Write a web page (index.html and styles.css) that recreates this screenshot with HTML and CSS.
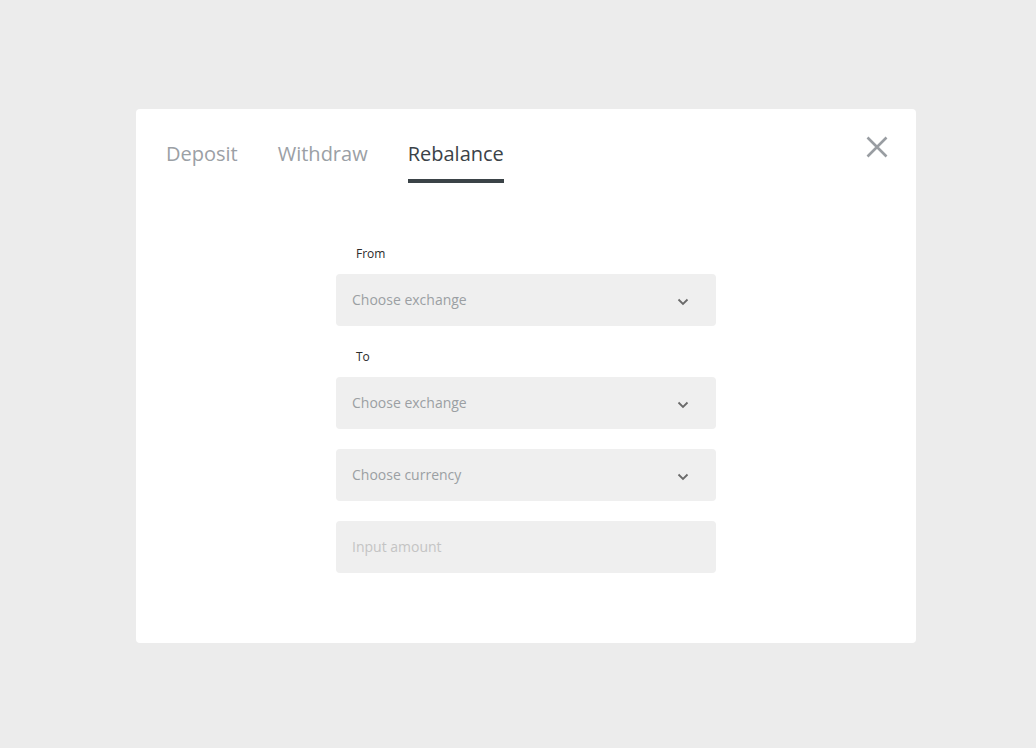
FILE: index.html
```html
<!DOCTYPE html>
<html>
<head>
<meta charset="utf-8">
<link rel="stylesheet" href="styles.css">
</head>
<body>
<div class="page">
  <div class="modal">
    <div class="head">
      <nav class="tabs">
        <span class="tab">Deposit</span>
        <span class="tab">Withdraw</span>
        <span class="tab active">Rebalance</span>
      </nav>
      <button class="close" aria-label="Close">
        <svg width="22" height="22" viewBox="0 0 22 22"><path d="M1.5 1.5L20.5 20.5M20.5 1.5L1.5 20.5" stroke="#999da2" stroke-width="2.6" fill="none"/></svg>
      </button>
    </div>
    <form class="form">
      <label class="label first">From</label>
      <div class="field select"><span>Choose exchange</span><svg class="chev" width="12" height="8" viewBox="0 0 12 8"><path d="M1.5 1.5L6 6L10.5 1.5" stroke="#6a6a6a" stroke-width="1.8" fill="none"/></svg></div>
      <label class="label">To</label>
      <div class="field select"><span>Choose exchange</span><svg class="chev" width="12" height="8" viewBox="0 0 12 8"><path d="M1.5 1.5L6 6L10.5 1.5" stroke="#6a6a6a" stroke-width="1.8" fill="none"/></svg></div>
      <div class="field select spaced"><span>Choose currency</span><svg class="chev" width="12" height="8" viewBox="0 0 12 8"><path d="M1.5 1.5L6 6L10.5 1.5" stroke="#6a6a6a" stroke-width="1.8" fill="none"/></svg></div>
      <input class="field input spaced" type="text" placeholder="Input amount">
    </form>
  </div>
</div>
</body>
</html>
```
FILE: styles.css
```css
* { box-sizing: border-box; }
html, body { margin: 0; padding: 0; }
body {
  background: #ececec;
  font-family: "Open Sans", "Noto Sans", sans-serif;
  width: 1036px;
  height: 748px;
  overflow: hidden;
}
.page {
  padding: 109px 0 0 136px;
  display: flex;
}
.modal {
  width: 780px;
  height: 534px;
  background: #fff;
  border-radius: 4px;
  padding: 0 30px;
}
.head {
  display: flex;
  justify-content: space-between;
  align-items: flex-start;
}
.tabs {
  display: flex;
  gap: 40px;
  padding-top: 31px;
}
.tab {
  font-size: 20px;
  line-height: 27px;
  color: #9ba0a5;
  padding-bottom: 12px;
  border-bottom: 4px solid transparent;
}
.tab.active {
  color: #3b4248;
  border-bottom-color: #3b4347;
}
.close {
  margin-top: 27px;
  margin-right: -2px;
  background: none;
  border: 0;
  padding: 0;
  width: 22px;
  height: 22px;
  display: block;
}
.close svg { display: block; }
.form {
  width: 380px;
  margin: 0 auto;
  display: flex;
  flex-direction: column;
}
.label {
  font-size: 12px;
  line-height: 16px;
  color: #2b2b2b;
  padding-left: 20px;
  margin-top: 23px;
  margin-bottom: 12px;
}
.label.first { margin-top: 63px; }
.field {
  height: 52px;
  background: #efefef;
  border-radius: 4px;
  border: 0;
  padding: 0 27px 0 16px;
  font-family: "Open Sans", "Noto Sans", sans-serif;
  font-size: 14px;
  color: #9b9fa3;
  display: flex;
  align-items: center;
  justify-content: space-between;
  width: 100%;
}
.field span { line-height: 20px; }
.chev { display: block; margin-top: 3px; }
.spaced { margin-top: 20px; }
.input { outline: none; padding-bottom: 1px; }
.input::placeholder { color: #c4c4c4; }
```
